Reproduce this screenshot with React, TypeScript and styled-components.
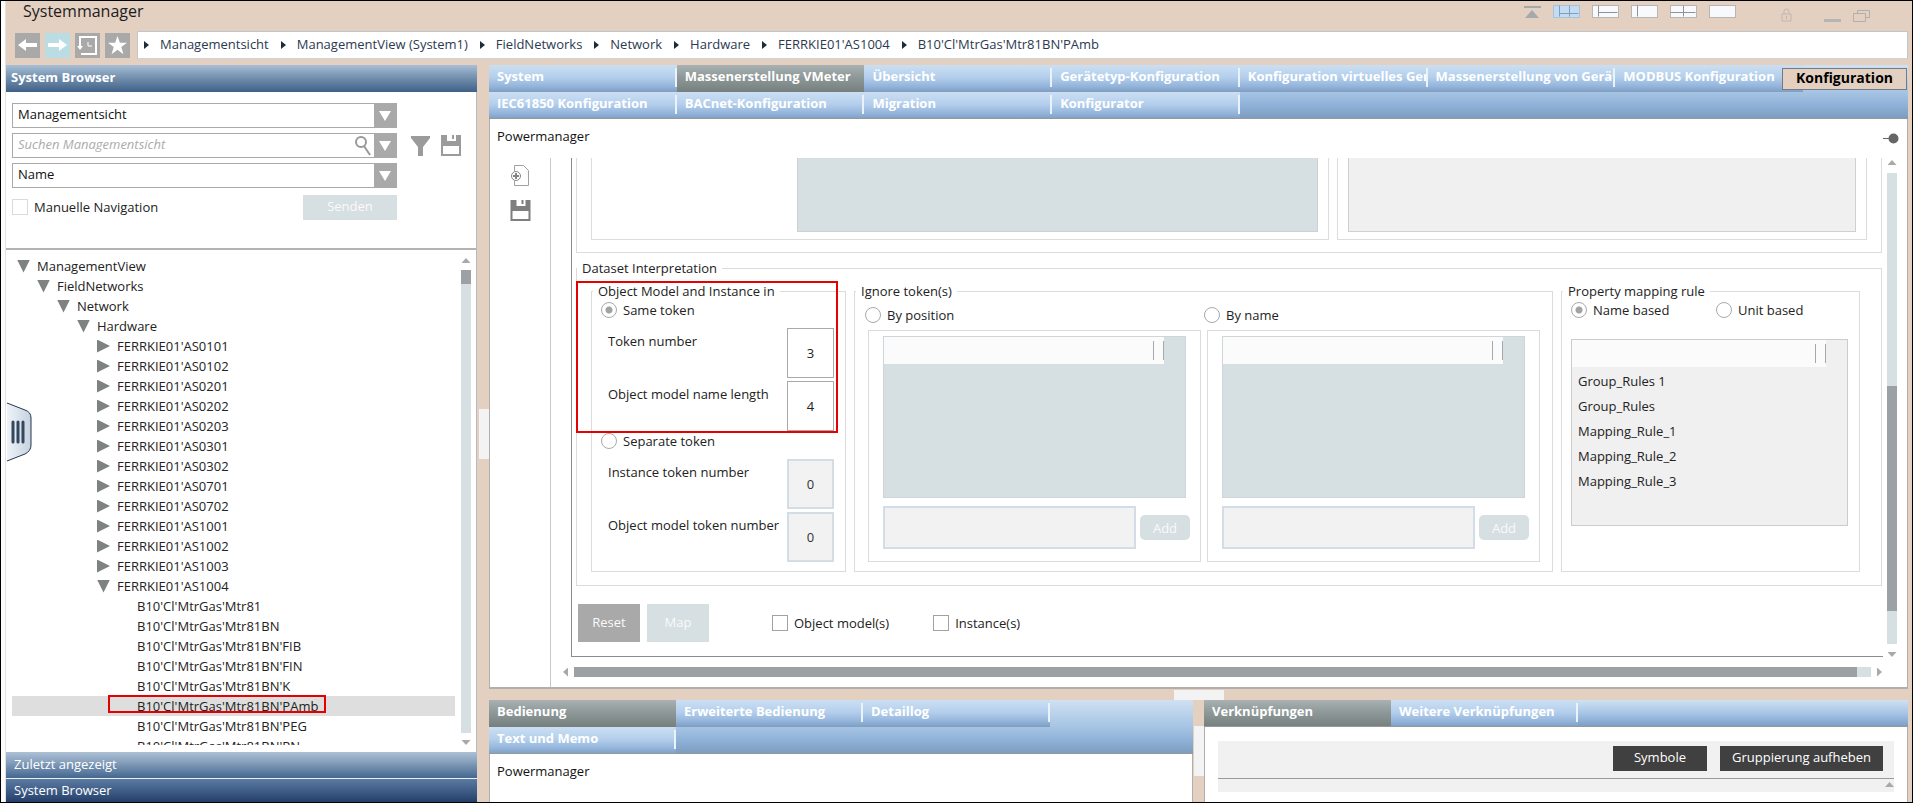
import React, { useState } from "react";
import styled, { createGlobalStyle, css } from "styled-components";

const color = {
  beige: "#e4d0c1",
  line: "#dcdcdc",
  gray: "#a9a9a9",
  mist: "#d6dfe2",
  thumb: "#9ba1a4",
  red: "#e60000",
};

const GlobalStyle = createGlobalStyle`
  *, *::before, *::after { box-sizing: border-box; }
  body { margin: 0; }
  body, button, input, select {
    font-family: "Open Sans", "Noto Sans", sans-serif;
    font-size: 13px;
    line-height: 20px;
    color: #222;
  }
  button { border: 0; padding: 0; background: none; }
  ul, ol { list-style: none; margin: 0; padding: 0; }
`;

/* ---------- window frame ---------- */

const Frame = styled.div`
  position: relative;
  display: flex;
  height: 100vh;
  min-height: 640px;
  overflow: hidden;
  border: 1px solid #000;
  background: ${color.beige};
`;

const EdgeStrip = styled.div`
  flex: 0 0 5px;
  background: #fdfdfd;
  border-right: 1px solid #e2e2e2;
`;

const Shell = styled.div`
  flex: 1;
  min-width: 0;
  display: flex;
  flex-direction: column;
  padding-right: 4px;
`;

const TitleBar = styled.header`
  display: flex;
  justify-content: space-between;
  height: 30px;
  padding: 0 38px 0 17px;
`;

const Title = styled.h1`
  margin: 0;
  font-size: 16px;
  font-weight: 400;
  line-height: 20px;
  color: #1c1c1c;
`;

const WindowTools = styled.div`
  display: flex;
  align-items: flex-start;
  gap: 12px;
  padding-top: 4px;
`;

const ToolButton = styled.button<{ $gap?: number }>`
  display: flex;
  margin-left: ${(p) => p.$gap ?? 0}px;
`;

const NavRow = styled.nav`
  display: flex;
  height: 28px;
  margin-bottom: 6px;
  padding-left: 9px;
`;

const NavButtons = styled.div`
  display: flex;
  align-items: center;
  gap: 5px;
  margin-right: 7px;
`;

const NavButton = styled.button<{ $light?: boolean }>`
  display: flex;
  align-items: center;
  justify-content: center;
  width: 25px;
  height: 25px;
  background: ${(p) => (p.$light ? "#b9dde2" : color.gray)};
`;

const Crumbs = styled.ol`
  flex: 1;
  display: flex;
  align-items: center;
  gap: 12px;
  padding-left: 6px;
  background: #fff;
  border: 1px solid #bfc6cc;
  border-bottom-color: #d0d3d6;
`;

const Crumb = styled.li`
  display: flex;
  align-items: center;
  gap: 11px;
  white-space: nowrap;

  &::before {
    content: "";
    border-left: 5px solid #1f2a3c;
    border-top: 4px solid transparent;
    border-bottom: 4px solid transparent;
  }

  a {
    color: #2b3a52;
    text-decoration: none;
    line-height: 22px;
    padding-bottom: 3px;
  }
`;

const Body = styled.div`
  flex: 1;
  min-height: 0;
  display: flex;
`;

const Splitter = styled.div<{ $horizontal?: boolean }>`
  display: flex;
  align-items: center;
  justify-content: ${(p) => (p.$horizontal ? "center" : "flex-end")};
  flex: 0 0 ${(p) => (p.$horizontal ? 11 : 12)}px;

  &::before {
    content: "";
    width: ${(p) => (p.$horizontal ? 50 : 10)}px;
    height: ${(p) => (p.$horizontal ? 10 : 50)}px;
    background: #f3f3f3;
  }
`;

/* ---------- sidebar ---------- */

const Sidebar = styled.aside`
  flex: 0 0 471px;
  display: flex;
  flex-direction: column;
  background: #fff;
  border-right: 1px solid #b4bac0;
`;

const BrowserHeader = styled.h2`
  margin: 0 -1px 0 0;
  height: 27px;
  padding-left: 5px;
  font-size: 13px;
  font-weight: 700;
  line-height: 25px;
  color: #fff;
  background: linear-gradient(#a9bfd6, #7f9bb7 35%, #3f6087);
`;

const BrowserForm = styled.form`
  display: flex;
  flex-direction: column;
  gap: 5px;
  height: 158px;
  padding: 11px 6px 0;
  border-bottom: 2px solid #b3b3b3;
`;

const FormRow = styled.div`
  display: flex;
  align-items: center;
  gap: 11px;
`;

const Combo = styled.div`
  position: relative;
  display: flex;
  flex: 0 0 385px;
  height: 25px;
  margin-right: 3px;
  border: 1px solid ${color.gray};

  select, input {
    flex: 1;
    min-width: 0;
    appearance: none;
    border: 0;
    outline: 0;
    padding: 0 5px 3px;
    background: #fff;
    color: #111;
  }
  input::placeholder { font-style: italic; color: #ababab; }
`;

const DropArrow = styled.button`
  flex: 0 0 22px;
  display: flex;
  align-items: center;
  justify-content: center;
  background: ${color.gray};

  &::before {
    content: "";
    border-top: 10px solid #fff;
    border-left: 6px solid transparent;
    border-right: 6px solid transparent;
  }
`;

const IconButton = styled.button`
  display: flex;
`;

const SendRow = styled.div`
  display: flex;
  justify-content: space-between;
  align-items: flex-start;
  width: 385px;
  margin-top: 2px;
`;

const SendButton = styled.button`
  width: 94px;
  height: 25px;
  padding-bottom: 4px;
  color: #fafafa;
  background: ${color.mist};
`;

const CheckLabel = styled.label<{ $gap?: number }>`
  display: flex;
  align-items: center;
  gap: 6px;
  margin-left: ${(p) => p.$gap ?? 0}px;
  line-height: 24px;
`;

const Checkbox = styled.input.attrs({ type: "checkbox" })<{ $faint?: boolean }>`
  appearance: none;
  width: 16px;
  height: 16px;
  margin: 0;
  background: #fff;
  border: 1px solid ${(p) => (p.$faint ? "#dadada" : "#a2a2a2")};
  &:checked { background: ${color.gray}; }
`;

const TreeArea = styled.div`
  flex: 1;
  min-height: 0;
  display: flex;
  gap: 6px;
  padding: 6px 5px 7px 6px;
`;

const Tree = styled.ul`
  flex: 1;
  overflow: hidden;
`;

const TreeRow = styled.li<{ $level: number; $selected?: boolean }>`
  position: relative;
  display: flex;
  align-items: center;
  gap: 7px;
  height: 20px;
  padding-left: ${(p) => 5 + p.$level * 20}px;
  white-space: nowrap;
  background: ${(p) => (p.$selected ? "#dedede" : "transparent")};
`;

const Twisty = styled.button<{ $state: "open" | "closed" | "leaf" }>`
  width: 13px;
  height: 13px;
  background: ${(p) => (p.$state === "leaf" ? "none" : "#7f8282")};
  clip-path: ${(p) =>
    p.$state === "open" ? "polygon(0 0, 100% 0, 50% 100%)" : "polygon(0 0, 100% 50%, 0 100%)"};
`;

const NodeMarker = styled.span`
  position: absolute;
  top: -1px;
  left: 96px;
  width: 218px;
  height: 18px;
  border: 2px solid ${color.red};
`;

const BrowserBar = styled.button<{ $dark?: boolean }>`
  flex: 0 0 ${(p) => (p.$dark ? 23 : 27)}px;
  margin-right: -1px;
  padding: 0 0 2px 8px;
  text-align: left;
  color: #fff;
  border-bottom: ${(p) => (p.$dark ? "0" : "1px solid #eef1f4")};
  background: ${(p) =>
    p.$dark ? "linear-gradient(#5b7ba3, #24406a)" : "linear-gradient(#adc0d4, #8aa3bf 35%, #44678f)"};
`;

/* ---------- scroll bars ---------- */

const ScrollColumn = styled.div`
  display: flex;
  flex-direction: column;
  align-items: center;
  gap: 7px;
  flex: 0 0 10px;
`;

const BrowserScroll = styled(ScrollColumn)`
  padding-top: 2px;
`;

const ScrollLine = styled.div`
  display: flex;
  align-items: center;
  gap: 6px;
  height: 30px;
  padding: 0 25px 0 12px;
`;

const arrowShape = {
  up: "polygon(50% 0, 100% 100%, 0 100%)",
  down: "polygon(0 0, 100% 0, 50% 100%)",
  left: "polygon(100% 0, 100% 100%, 0 50%)",
  right: "polygon(0 0, 100% 50%, 0 100%)",
};

const ScrollArrow = styled.button<{ $dir: keyof typeof arrowShape }>`
  flex: none;
  width: ${(p) => (p.$dir === "up" || p.$dir === "down" ? 9 : 5)}px;
  height: ${(p) => (p.$dir === "up" || p.$dir === "down" ? 5 : 9)}px;
  background: ${color.gray};
  clip-path: ${(p) => arrowShape[p.$dir]};
`;

const Track = styled.div<{ $row?: boolean }>`
  display: flex;
  flex-direction: ${(p) => (p.$row ? "row" : "column")};
  flex: 1;
  ${(p) => (p.$row ? "height: 10px;" : "width: 10px;")}
  background: ${color.mist};
`;

const Thumb = styled.div<{ $size: string }>`
  flex: ${(p) => p.$size};
  background: ${color.thumb};
`;

const TrackGap = styled.div<{ $size: string }>`
  flex: ${(p) => p.$size};
`;

/* ---------- tabs and panels ---------- */

const Workspace = styled.main`
  flex: 1;
  min-width: 0;
  display: flex;
  flex-direction: column;
`;

const Panel = styled.section<{ $grow?: boolean }>`
  flex: ${(p) => (p.$grow ? "1" : "none")};
  min-width: 0;
  min-height: 0;
  display: flex;
  flex-direction: column;
  background: #fff;
`;

const PanelBody = styled.div<{ $closed?: boolean }>`
  flex: 1;
  min-height: 0;
  display: flex;
  flex-direction: column;
  border: solid #b1aeac;
  border-width: 0 1px ${(p) => (p.$closed ? 2 : 0)}px;
`;

const TabStrip = styled.div<{ $columns: string; $end?: number }>`
  position: relative;
  display: grid;
  grid-template-columns: ${(p) => p.$columns};
  grid-auto-rows: 27px;
  padding-right: ${(p) => p.$end ?? 0}px;
  background: linear-gradient(#cfe1f2, #a6c4e4 50%, #8fb1d8 75%, #7c9bbd);
  box-shadow: inset 0 -1px #92999f;
`;

const Tab = styled.button<{ $active?: boolean; $bottom?: boolean }>`
  display: flex;
  align-items: flex-start;
  min-width: 0;
  padding: 3px 0 0 8px;
  color: #fff;
  font-weight: 700;
  text-align: left;
  white-space: nowrap;
  background: linear-gradient(#cbdff3, #b4cfec 45%, #92b3da 80%, #809dbf);
  ${(p) => p.$bottom && css`box-shadow: inset 0 -1px #92999f;`}

  span {
    flex: 1;
    min-width: 0;
    height: 20px;
    overflow: hidden;
    line-height: 17px;
  }
  &::after {
    content: "";
    width: 2px;
    height: 19px;
    background: #eaf2fa;
  }
  ${(p) =>
    p.$active &&
    css`
      background: linear-gradient(#a9b1b3, #8c9696 50%, #75807e);
      &::after { background: transparent; }
    `}
`;

const ModeButton = styled.button`
  position: absolute;
  top: 3px;
  right: 1px;
  width: 125px;
  height: 22px;
  font-size: 14px;
  font-weight: 700;
  line-height: 16px;
  padding-bottom: 3px;
  color: #000;
  background: ${color.beige};
  border: 1px solid #747b85;
`;

const PanelTitle = styled.div`
  display: flex;
  justify-content: space-between;
  height: 39px;
  padding: 0 8px 0 7px;
  line-height: 34px;
  color: #111;

  svg { margin-top: 14px; }
`;

const Content = styled.div`
  flex: 1;
  min-height: 0;
  display: flex;
`;

const ToolColumn = styled.div`
  flex: 0 0 61px;
  display: flex;
  flex-direction: column;
  align-items: center;
  gap: 14px;
  padding-top: 7px;
  border-right: 1px solid #c9c9c9;
`;

const ScrollArea = styled.div`
  flex: 1;
  min-width: 0;
  display: flex;
  flex-direction: column;
`;

const ScrollTop = styled.div`
  flex: 1;
  min-height: 0;
  display: flex;
  padding-left: 20px;
`;

const Viewport = styled.div`
  flex: 1;
  min-width: 0;
  display: flex;
  flex-direction: column;
  justify-content: flex-end;
  overflow: hidden;
  padding: 0 1px 14px 4px;
  border-left: 1px solid #8a8d90;
  border-bottom: 1px solid #8a8d90;
`;

const ViewportScroll = styled(ScrollColumn)`
  flex: 0 0 24px;
  padding: 2px 10px 0 4px;
  gap: 8px;
`;

/* ---------- form groups ---------- */

const UpperGroup = styled.div`
  flex: none;
  display: grid;
  grid-template-columns: 738fr 530fr;
  gap: 8px;
  height: 96px;
  margin-bottom: 6px;
  padding: 0 14px 12px;
  border: 1px solid ${color.line};
  border-top: 0;
`;

const UpperCell = styled.div<{ $indent: number }>`
  min-width: 0;
  padding: 0 10px 7px ${(p) => p.$indent}px;
  border: 1px solid ${color.line};
  border-top: 0;
`;

const UpperList = styled.div<{ $plain?: boolean }>`
  height: 100%;
  background: ${(p) => (p.$plain ? "#f0f0f0" : color.mist)};
  border: 1px solid #cdd1d3;
  border-top: 0;
`;

const Group = styled.fieldset<{ $width?: number; $pad: string }>`
  position: relative;
  flex: ${(p) => (p.$width ? `0 0 ${p.$width}px` : "1")};
  min-width: 0;
  margin: 0;
  padding: ${(p) => p.$pad};
  border: 1px solid ${color.line};

  > legend {
    height: 18px;
    padding: 0 5px;
    line-height: 18px;
  }
`;

const DatasetGroup = styled(Group)`
  flex: none;

  > legend { margin-left: -14px; }
`;

const GroupRow = styled.div`
  display: flex;
  gap: 8px;
`;

const IndentGroup = styled(Group)`
  > legend { margin-left: -8px; }
`;

const IgnoreGroup = styled(Group)`
  > legend { margin-left: -9px; margin-bottom: 5px; }
`;

const FocusMarker = styled.div`
  position: absolute;
  top: -19px;
  left: -16px;
  width: 262px;
  height: 152px;
  border: 2px solid ${color.red};
  pointer-events: none;
`;

const RadioLabel = styled.label<{ $width?: number }>`
  display: flex;
  align-items: center;
  gap: 6px;
  height: 20px;
  width: ${(p) => (p.$width ? `${p.$width}px` : "auto")};
`;

const Radio = styled.input.attrs({ type: "radio" })`
  appearance: none;
  width: 16px;
  height: 16px;
  margin: 0;
  border: 1px solid ${color.gray};
  border-radius: 50%;
  background: #fff;
  &:checked { background: radial-gradient(circle, #a2a2a2 3px, #fff 4px); }
`;

const TokenFields = styled.div`
  display: flex;
  flex-direction: column;
  gap: 3px;
  padding: 8px 0 0 7px;
`;

const TokenField = styled.label`
  display: flex;
  justify-content: space-between;
  line-height: 26px;

  input {
    width: 47px;
    height: 50px;
    padding: 0;
    text-align: center;
    background: #fff;
    border: 1px solid ${color.gray};
    border-radius: 0;
  }
  input:disabled {
    color: #333;
    background: #f2f2f2;
    border: 2px solid #d3dde5;
  }
`;

const IgnoreColumns = styled.div`
  display: grid;
  grid-template-columns: 1fr 1fr;
  gap: 3px;
`;

const IgnoreBox = styled.div`
  display: flex;
  flex-direction: column;
  gap: 8px;
  margin: 5px 0 0 3px;
  padding: 5px 10px 12px 14px;
  border: 1px solid ${color.line};
`;

const TokenList = styled.div<{ $plain?: boolean }>`
  height: ${(p) => (p.$plain ? 187 : 162)}px;
  margin-right: ${(p) => (p.$plain ? 0 : 4)}px;
  background: ${(p) => (p.$plain ? "#f0f0f0" : color.mist)};
  border: 1px solid ${(p) => (p.$plain ? "#cccccc" : "#cfd6d9")};
`;

const ListHeader = styled.div`
  display: flex;
  justify-content: flex-end;
  align-items: center;
  height: 27px;
  margin-right: 21px;
  background: #fbfbfb;

  &::before {
    content: "";
    width: 11px;
    height: 19px;
    border: solid #a6a9ab;
    border-width: 0 1px;
  }
`;

const RuleList = styled.ul`
  && { padding: 2px 0 0 6px; }
  line-height: 25px;
`;

const AddRow = styled.div`
  display: flex;
  align-items: center;
  gap: 4px;

  input {
    flex: 1;
    min-width: 0;
    height: 43px;
    background: #f2f2f2;
    border: 2px solid #d3dde7;
  }
`;

const AddButton = styled.button`
  width: 50px;
  height: 25px;
  color: #fafafa;
  background: ${color.mist};
  border-radius: 5px;
`;

const MappingModes = styled.div`
  display: flex;
  margin-bottom: 19px;
`;

const Actions = styled.div`
  flex: none;
  display: flex;
  align-items: center;
  gap: 7px;
  margin-top: 18px;
  padding-left: 2px;
`;

const ActionButton = styled.button<{ $muted?: boolean }>`
  width: 62px;
  height: 38px;
  padding-bottom: 2px;
  color: #fafafa;
  background: ${(p) => (p.$muted ? color.mist : color.gray)};
`;

/* ---------- lower panels ---------- */

const LowerRow = styled.div`
  flex: 0 0 102px;
  display: grid;
  grid-template-columns: 1fr 11px 1fr;
`;

const LinkToolbar = styled.div`
  display: flex;
  justify-content: flex-end;
  gap: 13px;
  height: 38px;
  margin: 14px 13px 0;
  padding: 5px 11px 0 0;
  background: #f1f1f1;
  border-bottom: 1px solid #9a9a9a;
`;

const LinkButton = styled.button<{ $wide?: boolean }>`
  width: ${(p) => (p.$wide ? 163 : 94)}px;
  height: 25px;
  padding-bottom: 3px;
  color: #fff;
  background: #404040;
`;

const LinkStrip = styled.div`
  display: flex;
  justify-content: flex-end;
  height: 13px;
  margin: 0 13px;
  padding-top: 3px;
  background: #f1f1f1;
`;

/* ---------- drawings ---------- */

const HandleDrawing = styled.svg`
  position: absolute;
  top: 401px;
  left: 6px;
`;

const SaveIcon = ({ fill = "#9b9b9b", width = 20 }: { fill?: string; width?: number }) => (
  <svg width={width} height="21" viewBox="0 0 20 21" aria-hidden="true">
    <path fill={fill} fillRule="evenodd" d="M0 0h20v21H0zM2 11v8h16v-8z" />
    <path fill="#fff" d="M6 0h5v4h2V0h2v6H6z" />
  </svg>
);

type LayoutKind = "three" | "split" | "side" | "quad" | "single";
const layoutLines: Record<LayoutKind, string> = {
  three: "M7 1v11M17 1v11M7 9h19",
  split: "M7 1v11M7 8h19",
  side: "M7 1v11",
  quad: "M14 1v11M1 8h25",
  single: "",
};

const LayoutIcon = ({ kind }: { kind: LayoutKind }) => (
  <svg width="27" height="13" viewBox="0 0 27 13" aria-hidden="true">
    <rect
      x="0.5"
      y="0.5"
      width="26"
      height="12"
      fill={kind === "three" ? "#c3dcf3" : "#f7f9fd"}
      stroke={kind === "three" ? "#a9c3d8" : "#b9b5b3"}
    />
    <path
      d={layoutLines[kind]}
      stroke={kind === "three" ? "#7f9fb8" : "#8f9296"}
      fill="none"
      transform="translate(-0.5 -0.5)"
    />
  </svg>
);

/* ---------- data ---------- */

const crumbs = [
  "Managementsicht",
  "ManagementView (System1)",
  "FieldNetworks",
  "Network",
  "Hardware",
  "FERRKIE01'AS1004",
  "B10'Cl'MtrGas'Mtr81BN'PAmb",
];

type Node = { name: string; level: number; state: "open" | "closed" | "leaf" };
const tree: Node[] = [
  { name: "ManagementView", level: 0, state: "open" },
  { name: "FieldNetworks", level: 1, state: "open" },
  { name: "Network", level: 2, state: "open" },
  { name: "Hardware", level: 3, state: "open" },
  ...["0101", "0102", "0201", "0202", "0203", "0301", "0302", "0701", "0702", "1001", "1002", "1003"].map(
    (id): Node => ({ name: `FERRKIE01'AS${id}`, level: 4, state: "closed" })
  ),
  { name: "FERRKIE01'AS1004", level: 4, state: "open" },
  ...["", "BN", "BN'FIB", "BN'FIN", "BN'K", "BN'PAmb", "BN'PEG", "BN'PN"].map(
    (id): Node => ({ name: `B10'Cl'MtrGas'Mtr81${id}`, level: 5, state: "leaf" })
  ),
];

const mainTabs = [
  "System",
  "Massenerstellung VMeter",
  "Übersicht",
  "Gerätetyp-Konfiguration",
  "Konfiguration virtuelles Gerät",
  "Massenerstellung von Geräten",
  "MODBUS Konfiguration",
  "IEC61850 Konfiguration",
  "BACnet-Konfiguration",
  "Migration",
  "Konfigurator",
];

const rules = ["Group_Rules 1", "Group_Rules", "Mapping_Rule_1", "Mapping_Rule_2", "Mapping_Rule_3"];

/* ---------- parts ---------- */

function Tabs({ names, active, perRow }: { names: string[]; active: string; perRow: number }) {
  const rowOf = (i: number) => Math.floor(i / perRow);
  const lastRow = rowOf(names.length - 1);
  return (
    <>
      {names.map((name, i) => (
        <Tab key={name} type="button" $active={name === active} $bottom={rowOf(i) === lastRow}>
          <span>{name}</span>
        </Tab>
      ))}
    </>
  );
}

function TokenInput({ label, value, disabled }: { label: string; value: string; disabled?: boolean }) {
  return (
    <TokenField>
      {label}
      <input type="text" defaultValue={value} disabled={disabled} />
    </TokenField>
  );
}

function IgnoreColumn({ label }: { label: string }) {
  return (
    <div>
      <RadioLabel>
        <Radio name="ignore" />
        {label}
      </RadioLabel>
      <IgnoreBox>
        <TokenList>
          <ListHeader />
        </TokenList>
        <AddRow>
          <input type="text" aria-label={label} disabled />
          <AddButton type="button" disabled>Add</AddButton>
        </AddRow>
      </IgnoreBox>
    </div>
  );
}

function SystemBrowser() {
  const [selected, setSelected] = useState("B10'Cl'MtrGas'Mtr81BN'PAmb");
  return (
    <Sidebar>
      <BrowserHeader>System Browser</BrowserHeader>
      <BrowserForm onSubmit={(e) => e.preventDefault()}>
        <FormRow>
          <Combo>
            <select aria-label="Sicht"><option>Managementsicht</option></select>
            <DropArrow type="button" aria-label="Sicht öffnen" />
          </Combo>
        </FormRow>
        <FormRow>
          <Combo>
            <input type="text" aria-label="Suchen" placeholder="Suchen Managementsicht" />
            <IconButton type="button" aria-label="Suche starten">
              <svg width="20" height="23" viewBox="0 0 20 23" fill="none" stroke="#999" strokeWidth="2">
                <circle cx="7" cy="8" r="5" />
                <path d="M10 12l6 9" />
              </svg>
            </IconButton>
            <DropArrow type="button" aria-label="Suchverlauf" />
          </Combo>
          <IconButton type="button" aria-label="Filter">
            <svg width="19" height="20" viewBox="0 0 19 20"><path fill="#9b9b9b" d="M0 0h19v2l-7 9v9H7v-9L0 2z" /></svg>
          </IconButton>
          <IconButton type="button" aria-label="Filter speichern"><SaveIcon /></IconButton>
        </FormRow>
        <FormRow>
          <Combo>
            <select aria-label="Anzeige"><option>Name</option></select>
            <DropArrow type="button" aria-label="Anzeige öffnen" />
          </Combo>
        </FormRow>
        <SendRow>
          <CheckLabel><Checkbox $faint />Manuelle Navigation</CheckLabel>
          <SendButton type="button" disabled>Senden</SendButton>
        </SendRow>
      </BrowserForm>
      <TreeArea>
        <Tree>
          {tree.map((n) => (
            <TreeRow key={n.name} $level={n.level} $selected={n.name === selected} onClick={() => setSelected(n.name)}>
              {n.state === "leaf" ? (
                <Twisty as="span" $state="leaf" />
              ) : (
                <Twisty type="button" $state={n.state} aria-label={n.name} />
              )}
              {n.name}
              {n.name === selected && <NodeMarker />}
            </TreeRow>
          ))}
        </Tree>
        <BrowserScroll>
          <ScrollArrow type="button" $dir="up" aria-label="Nach oben" />
          <Track><Thumb $size="0 0 14px" /></Track>
          <ScrollArrow type="button" $dir="down" aria-label="Nach unten" />
        </BrowserScroll>
      </TreeArea>
      <BrowserBar type="button">Zuletzt angezeigt</BrowserBar>
      <BrowserBar type="button" $dark>System Browser</BrowserBar>
    </Sidebar>
  );
}

function DatasetInterpretation() {
  return (
    <DatasetGroup $pad="5px 21px 13px 14px">
      <legend>Dataset Interpretation</legend>
      <GroupRow>
        <IndentGroup $width={255} $pad="0 11px 9px 9px">
          <legend>Object Model and Instance in</legend>
          <RadioLabel><Radio name="instance" defaultChecked />Same token</RadioLabel>
          <TokenFields>
            <TokenInput label="Token number" value="3" />
            <TokenInput label="Object model name length" value="4" />
          </TokenFields>
          <RadioLabel><Radio name="instance" />Separate token</RadioLabel>
          <TokenFields>
            <TokenInput label="Instance token number" value="0" disabled />
            <TokenInput label="Object model token number" value="0" disabled />
          </TokenFields>
          <FocusMarker />
        </IndentGroup>
        <IgnoreGroup $pad="0 12px 9px 10px">
          <legend>Ignore token(s)</legend>
          <IgnoreColumns>
            <IgnoreColumn label="By position" />
            <IgnoreColumn label="By name" />
          </IgnoreColumns>
        </IgnoreGroup>
        <IndentGroup $width={299} $pad="0 11px 9px 9px">
          <legend>Property mapping rule</legend>
          <MappingModes>
            <RadioLabel $width={145}><Radio name="mapping" defaultChecked />Name based</RadioLabel>
            <RadioLabel><Radio name="mapping" />Unit based</RadioLabel>
          </MappingModes>
          <TokenList $plain>
            <ListHeader />
            <RuleList>{rules.map((r) => <li key={r}>{r}</li>)}</RuleList>
          </TokenList>
        </IndentGroup>
      </GroupRow>
    </DatasetGroup>
  );
}

export default function App() {
  return (
    <Frame>
      <GlobalStyle />
      <EdgeStrip />
      <Shell>
        <TitleBar>
          <Title>Systemmanager</Title>
          <WindowTools>
            <ToolButton type="button" aria-label="Einklappen">
              <svg width="17" height="14" viewBox="0 0 17 14"><path fill="#a4aaab" d="M0 1h17v2H0zM8 5l7 8H1z" /></svg>
            </ToolButton>
            {(["three", "split", "side", "quad", "single"] as LayoutKind[]).map((k) => (
              <ToolButton key={k} type="button" aria-label={`Layout ${k}`}><LayoutIcon kind={k} /></ToolButton>
            ))}
            <ToolButton type="button" aria-label="Sperren" $gap={33}>
              <svg width="11" height="17" viewBox="0 0 11 17" fill="none" stroke="#c0b7b1">
                <path d="M1 9h9v7H1zM3 9V6q0-2 2.500-2T8 6v3M5.500 11v3" />
              </svg>
            </ToolButton>
            <ToolButton type="button" aria-label="Minimieren" $gap={20}>
              <svg width="17" height="17" viewBox="0 0 17 17"><path fill="#b5b5b3" d="M0 14h17v3H0z" /></svg>
            </ToolButton>
            <ToolButton type="button" aria-label="Wiederherstellen">
              <svg width="17" height="17" viewBox="0 0 17 17" fill="none" stroke="#b0b0ae">
                <path d="M.5 8.500h12v8H.5zM4.500 8V5.500h12v7H13" />
              </svg>
            </ToolButton>
          </WindowTools>
        </TitleBar>
        <NavRow aria-label="Navigation">
          <NavButtons>
            <NavButton type="button" aria-label="Zurück">
              <svg width="19" height="14" viewBox="0 0 19 14"><path fill="#fff" d="M0 7l8-6v4h11v4H8v4z" /></svg>
            </NavButton>
            <NavButton type="button" aria-label="Vor" $light>
              <svg width="19" height="14" viewBox="0 0 19 14"><path fill="#fff" d="M19 7l-8-6v4H0v4h11v4z" /></svg>
            </NavButton>
            <NavButton type="button" aria-label="Verlauf">
              <svg width="21" height="21" viewBox="0 0 21 21" fill="none" stroke="#fff" strokeWidth="2">
                <path d="M3 12V2h16v17H4" />
                <path d="M0 11h6l-3 4z" fill="#fff" stroke="none" />
                <path d="M11 7v4h4" strokeWidth="1" />
              </svg>
            </NavButton>
            <NavButton type="button" aria-label="Favoriten">
              <svg width="19" height="19" viewBox="0 0 24 24">
                <path fill="#fff" d="M12 0l3 8.500h9l-7.200 5.500 2.700 9L12 17.500 4.500 23l2.700-9L0 8.500h9z" />
              </svg>
            </NavButton>
          </NavButtons>
          <Crumbs>
            {crumbs.map((c) => <Crumb key={c}><a href="#">{c}</a></Crumb>)}
          </Crumbs>
        </NavRow>
        <Body>
          <SystemBrowser />
          <Splitter />
          <Workspace>
            <Panel $grow>
              <TabStrip $columns="repeat(7, 1fr)" $end={105}>
                <Tabs names={mainTabs} active="Massenerstellung VMeter" perRow={7} />
                <ModeButton type="button">Konfiguration</ModeButton>
              </TabStrip>
              <PanelBody $closed>
                <PanelTitle>
                  Powermanager
                  <svg width="16" height="11" viewBox="0 0 16 11">
                    <path d="M0 5h7v1H0z" fill="#666" />
                    <ellipse cx="10.500" cy="5.500" rx="5" ry="5" fill="#666" />
                  </svg>
                </PanelTitle>
                <Content>
                  <ToolColumn>
                    <IconButton type="button" aria-label="Neu">
                      <svg width="19" height="21" viewBox="0 0 19 21" fill="none" stroke="#858585">
                        <path d="M3.500 6V.5h9l5 5v15h-14V16" stroke="#a0a0a0" />
                        <circle cx="5" cy="11" r="4.500" />
                        <path d="M5 8v6M2 11h6" strokeWidth="2" />
                      </svg>
                    </IconButton>
                    <IconButton type="button" aria-label="Speichern"><SaveIcon fill="#7f7f7f" width={21} /></IconButton>
                  </ToolColumn>
                  <ScrollArea>
                    <ScrollTop>
                      <Viewport>
                        <UpperGroup>
                          <UpperCell $indent={205}><UpperList /></UpperCell>
                          <UpperCell $indent={10}><UpperList $plain /></UpperCell>
                        </UpperGroup>
                        <DatasetInterpretation />
                        <Actions>
                          <ActionButton type="button">Reset</ActionButton>
                          <ActionButton type="button" $muted disabled>Map</ActionButton>
                          <CheckLabel $gap={56}><Checkbox />Object model(s)</CheckLabel>
                          <CheckLabel $gap={37}><Checkbox />Instance(s)</CheckLabel>
                        </Actions>
                      </Viewport>
                      <ViewportScroll>
                        <ScrollArrow type="button" $dir="up" aria-label="Nach oben" />
                        <Track>
                          <TrackGap $size="215 1 0" />
                          <Thumb $size="227 1 0" />
                          <TrackGap $size="33 1 0" />
                        </Track>
                        <ScrollArrow type="button" $dir="down" aria-label="Nach unten" />
                      </ViewportScroll>
                    </ScrollTop>
                    <ScrollLine>
                      <ScrollArrow type="button" $dir="left" aria-label="Nach links" />
                      <Track $row>
                        <Thumb $size="1" />
                        <TrackGap $size="0 0 14px" />
                      </Track>
                      <ScrollArrow type="button" $dir="right" aria-label="Nach rechts" />
                    </ScrollLine>
                  </ScrollArea>
                </Content>
              </PanelBody>
            </Panel>
            <Splitter $horizontal />
            <LowerRow>
              <Panel>
                <TabStrip $columns="repeat(3, 187px)">
                  <Tabs names={["Bedienung", "Erweiterte Bedienung", "Detaillog", "Text und Memo"]} active="Bedienung" perRow={3} />
                </TabStrip>
                <PanelBody>
                  <PanelTitle>Powermanager</PanelTitle>
                </PanelBody>
              </Panel>
              <Splitter />
              <Panel>
                <TabStrip $columns="repeat(2, 187px)">
                  <Tabs names={["Verknüpfungen", "Weitere Verknüpfungen"]} active="Verknüpfungen" perRow={2} />
                </TabStrip>
                <PanelBody>
                  <LinkToolbar>
                    <LinkButton type="button">Symbole</LinkButton>
                    <LinkButton type="button" $wide>Gruppierung aufheben</LinkButton>
                  </LinkToolbar>
                  <LinkStrip>
                    <ScrollArrow type="button" $dir="up" aria-label="Nach oben" />
                  </LinkStrip>
                </PanelBody>
              </Panel>
            </LowerRow>
          </Workspace>
        </Body>
      </Shell>
      <HandleDrawing width="26" height="60" viewBox="0 0 26 60" aria-hidden="true">
        <defs>
          <linearGradient id="flap" x1="0" x2="1">
            <stop offset="0" stopColor="#eef3f8" />
            <stop offset="1" stopColor="#c5d2e0" />
          </linearGradient>
        </defs>
        <path d="M0 1L18 8Q24 10 24 16V43Q24 49 18 52L0 59" fill="url(#flap)" stroke="#24364c" strokeWidth="1" />
        <path d="M6 20V40M11 20V40M16 20V40" stroke="#35475f" strokeWidth="3" strokeLinecap="round" />
      </HandleDrawing>
    </Frame>
  );
}
